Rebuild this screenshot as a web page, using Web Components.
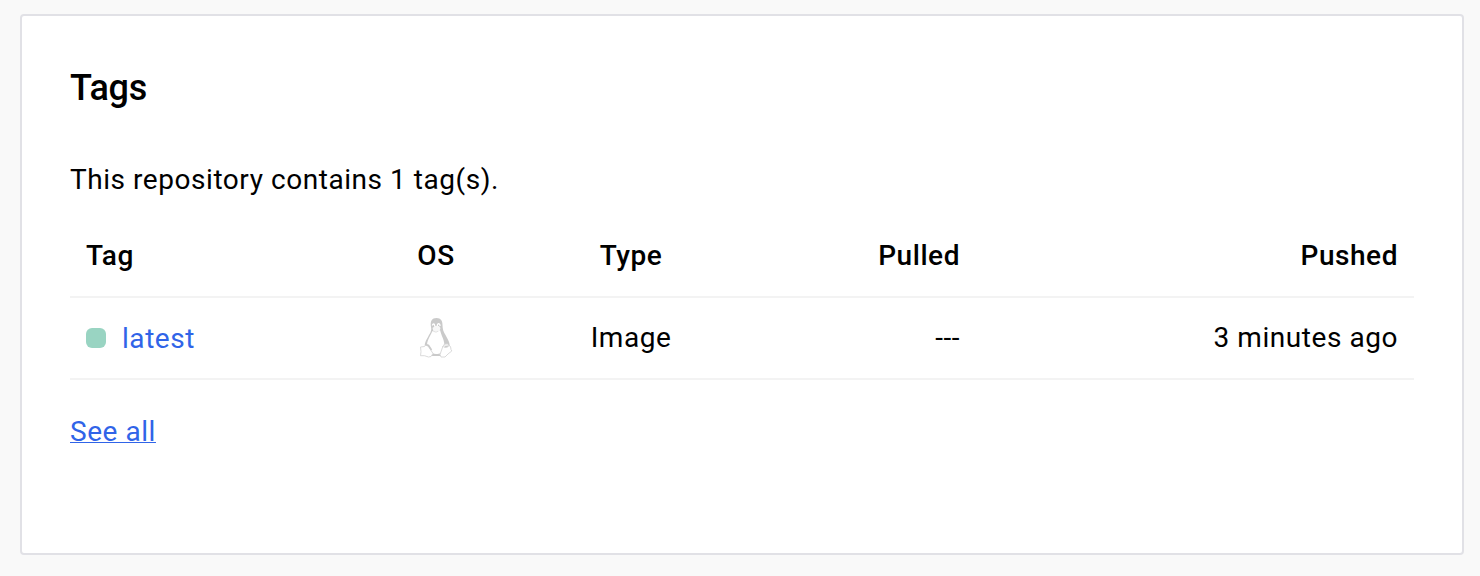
<!DOCTYPE html>
<html lang="en"><head><meta charset="utf-8"><title>Tags</title>
<style>html,body{margin:0;height:100%;background:#f9f9f9}body{font-family:Roboto,"Liberation Sans",sans-serif;color:#000}</style></head>
<body><tags-card></tags-card>
<script>
customElements.define('linux-icon',class extends HTMLElement{constructor(){super();this.attachShadow({mode:'open'}).innerHTML=`<style>:host{display:block;width:36px;height:42px}svg{display:block}</style>
<svg width="36" height="42" viewBox="0 0 36 42">
<path d="M13 10C12 4 14 1 18.500 1s6 3 6 7c0 4 1 7 3 10 2 4 5 8 4 12l-3 6-3 3H12l-5-8c-1-4 1-8 3-11 2-4 4-6 3-10Z" fill="#cacaca"/>
<path d="M14.500 14c2 1.500 5 1.500 7.500-1 1 4 2.500 7 3.500 10 1 4 1.500 6 .5 9-1 4-4 5-8 5-3 0-4-1-5-3L9 28c0-4 2-7 3.500-10Z" fill="#fff"/>
<path d="M14.500 11l2.500-2h4l1.500 2-1 3-3 1.500-3-1Z" fill="#f7f7f7"/><path d="M14.500 8.500c0-2 2-2 2.200 0v1M19.300 9c-.3-3 3-3 2.700 0" fill="none" stroke="#fff" stroke-width="1.300"/><path d="M16 14.500l2 .7 2-1" fill="none" stroke="#ddd" stroke-width=".8"/>
<path d="M2.500 30l4-.5L8 28l2.500 1.500 4.500 7-2 3-2.500.5-4-1.300H2.500l.5-4Z" fill="#fff" stroke="#d6d6d6" stroke-width=".9"/>
<path d="M8 27.500l2.500 1 3 4.500" fill="none" stroke="#cacaca" stroke-width="1.600"/>
<path d="M25 29c0 2 5 2 6-.5l1.500 1 .5 3 .8 1.500-3.800 3-3 3h-4l-1-2.500Z" fill="#fff" stroke="#d6d6d6" stroke-width=".9"/>
<path d="M25 29.500l1.500-2.500 3-.5 1.500 2" fill="#eee" stroke="#ccc" stroke-width=".7"/></svg>`}});
customElements.define('tag-table',class extends HTMLElement{constructor(){super();this.attachShadow({mode:'open'}).innerHTML=`<style>:host{display:block}.row{height:80px;border-bottom:2px solid #f3f3f3;display:grid;grid-template-columns:260px 180px 210px 224px 1fr;align-items:center;padding:0 16px;font-size:28px;line-height:40px;letter-spacing:.55px}.head{font-weight:500}.c{text-align:center;justify-self:center}.r{text-align:right}.tag{display:flex;align-items:center;gap:16px;color:#3064e8}.tag span{padding-top:2px}.dot{width:20px;height:20px;border-radius:6px;background:#99d4c2}</style>
<div class="row head"><span>Tag</span><span class="c">OS</span><span class="c">Type</span><span class="r">Pulled</span><span class="r">Pushed</span></div>
<div class="row"><span class="tag"><i class="dot"></i><span>latest</span></span><linux-icon class="c"></linux-icon><span class="c">Image</span><span class="r">---</span><span class="r">3 minutes ago</span></div>`}});
customElements.define('tags-card',class extends HTMLElement{constructor(){super();this.attachShadow({mode:'open'}).innerHTML=`<style>:host{display:block;box-sizing:border-box;padding:14px 16px 21px 20px;height:576px}section{box-sizing:border-box;height:541px;background:#fff;border:2px solid #e1e1e6;border-radius:4px;padding:48px}h2{font-size:36px;line-height:48px;font-weight:500;letter-spacing:-.2px;margin:0}p{font-size:28px;line-height:40px;letter-spacing:.55px;margin:48px 0 16px}a{display:inline-block;font-size:28px;line-height:40px;letter-spacing:.55px;margin-top:32px;color:#3064e8;text-decoration:underline;text-decoration-thickness:1px}</style>
<section><h2>Tags</h2><p>This repository contains 1 tag(s).</p><tag-table></tag-table><a>See all</a></section>`}});
</script></body></html>
